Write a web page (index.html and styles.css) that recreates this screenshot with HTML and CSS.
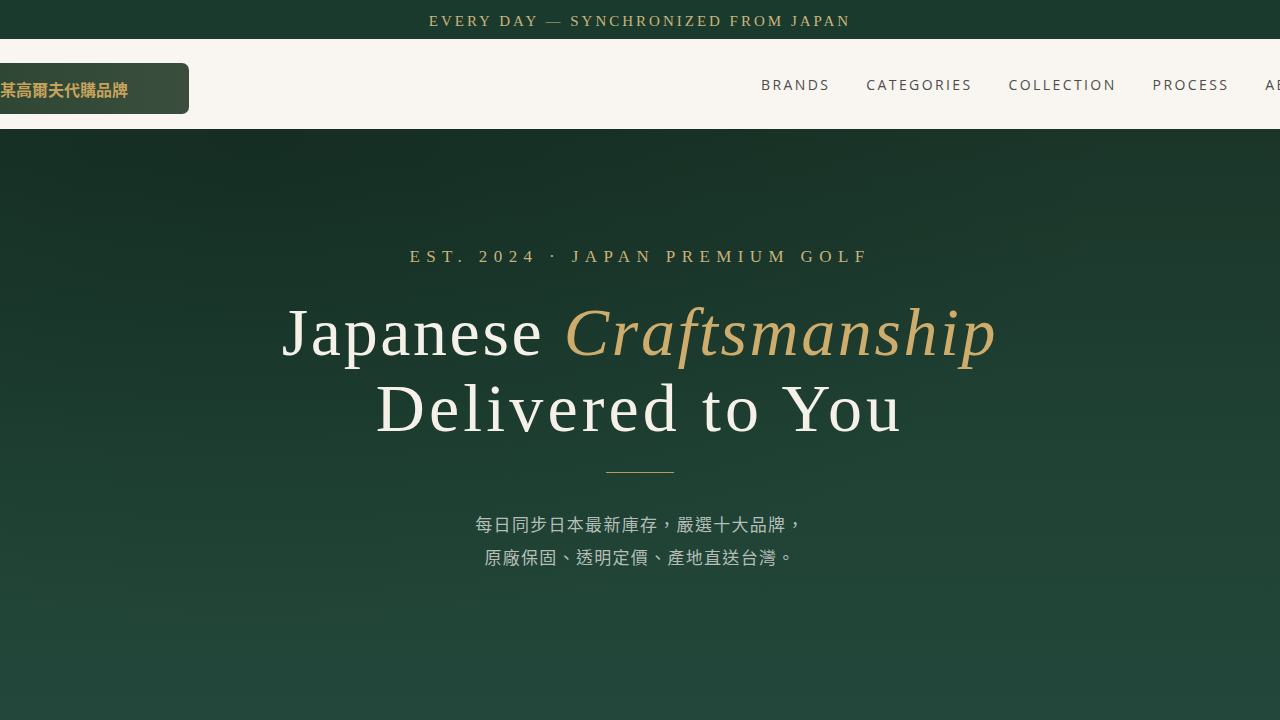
FILE: index.html
```html
<!doctype html>
<html lang="zh-Hant">
  <head>
    <meta charset="UTF-8" />
    <title>Japan Premium Golf</title>
    <link rel="stylesheet" href="styles.css">
  </head>
  <body>
    <div class="topbar">EVERY DAY — SYNCHRONIZED FROM JAPAN</div>

    <header class="header">
      <a class="logo" href="#">某高爾夫代購品牌</a>
      <nav class="nav">
        <a href="#">BRANDS</a>
        <a href="#">CATEGORIES</a>
        <a href="#">COLLECTION</a>
        <a href="#">PROCESS</a>
        <a href="#">ABOUT</a>
      </nav>
    </header>

    <section class="hero">
      <p class="eyebrow">EST. 2024 · JAPAN PREMIUM GOLF</p>
      <h1 class="title">
        Japanese <em>Craftsmanship</em><br />
        <span class="title-line">Delivered to You</span>
      </h1>
      <div class="divider"></div>
      <p class="lead">
        每日同步日本最新庫存，嚴選十大品牌，<br />
        原廠保固、透明定價、產地直送台灣。
      </p>
    </section>
  </body>
</html>
```

FILE: styles.css
```css
body {
  margin: 0;
  overflow: hidden;
  width: 1280px;
  height: 720px;
  background: #1e4033;
}

a {
  text-decoration: none;
}

.topbar {
  height: 39px;
  display: flex;
  align-items: center;
  justify-content: center;
  padding-top: 3px;
  box-sizing: border-box;
  background: #1b3a2e;
  color: #c9b47c;
  font-family: "Liberation Serif", serif;
  font-size: 15px;
  letter-spacing: 3px;
}

.header {
  height: 90px;
  display: flex;
  align-items: center;
  justify-content: space-between;
  background: #f9f6f1;
  white-space: nowrap;
}

.logo {
  display: flex;
  align-items: center;
  width: 220px;
  height: 51px;
  margin: 9px 0 0 -31px;
  padding-left: 31px;
  box-sizing: border-box;
  border-radius: 7px;
  background: linear-gradient(90deg, #2c4632, #3b4e3e);
  color: #c6a35c;
  font-family: "Noto Sans CJK TC", sans-serif;
  font-weight: 700;
  font-size: 16px;
}

.nav {
  display: flex;
  gap: 36px;
  margin-right: -44px;
}

.nav a {
  color: #4d4d4d;
  font-family: "Open Sans", sans-serif;
  font-size: 14px;
  letter-spacing: 2.4px;
}

.hero {
  height: 591px;
  display: flex;
  flex-direction: column;
  align-items: center;
  padding-top: 118px;
  box-sizing: border-box;
  background:
    radial-gradient(ellipse at 20% 0%, rgba(10, 30, 22, 0.35), transparent 60%),
    linear-gradient(180deg, #1b3529 0%, #1f4234 55%, #23473a 100%);
  text-align: center;
}

.eyebrow {
  margin: 0;
  color: #c9b27a;
  font-family: "Liberation Serif", serif;
  font-size: 17px;
  letter-spacing: 6.4px;
}

.title {
  margin: 27px 0 0;
  color: #f6f1e8;
  font-family: "Liberation Serif", serif;
  font-weight: 400;
  font-size: 68px;
  line-height: 76px;
  letter-spacing: 2.6px;
}

.title em {
  color: #cdac6c;
}

.title-line {
  letter-spacing: 4.1px;
}

.divider {
  width: 68px;
  height: 1px;
  margin-top: 26px;
  background: #b99a5e;
}

.lead {
  margin: 34px 0 0;
  color: #b4beb7;
  font-family: "Noto Sans CJK TC", sans-serif;
  font-size: 17px;
  line-height: 33px;
  letter-spacing: 1.3px;
}
```
